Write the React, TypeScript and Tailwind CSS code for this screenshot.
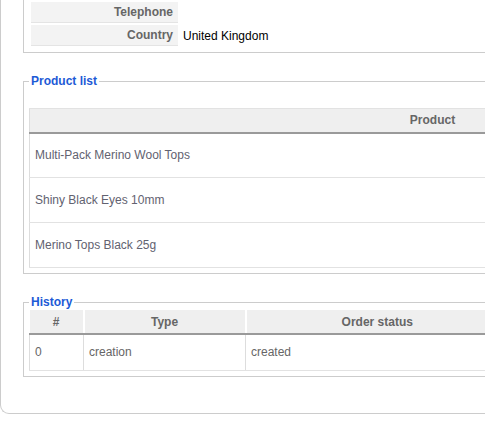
import React from "react";

const products = ["Multi-Pack Merino Wool Tops", "Shiny Black Eyes 10mm", "Merino Tops Black 25g"];

const history = [{ id: "0", type: "creation", status: "created" }];

function Legend({ children }: { children: React.ReactNode }) {
  return <legend className="px-[2px] text-[12px] font-bold leading-[16px] text-[#1d5ad6]">{children}</legend>;
}

export default function App() {
  return (
    <div className="h-[422px] w-[485px] overflow-hidden bg-white font-['Liberation_Sans',Arial,sans-serif] text-[12px]">
      <div className="w-[900px] rounded-bl-[9px] border-b border-l border-[#cccccc] pb-[36px] pl-[22px]">
        {/* address block, scrolled off at the top */}
        <div className="w-[818px] border-x border-b border-[#cccccc] px-[5px] pb-[4px]">
          <table className="border-separate border-spacing-[2px]">
            <tbody>
              <tr>
                <td className="h-[21px] w-[147px] border-b border-[#e4e4e4] bg-[#f3f3f3] pr-[5px] text-right align-middle font-bold text-[#666666]">
                  Telephone
                </td>
                <td className="pl-[3px] align-middle text-black"></td>
              </tr>
              <tr>
                <td className="h-[21px] w-[147px] border-b border-[#e4e4e4] bg-[#f3f3f3] pr-[5px] text-right align-middle font-bold text-[#666666]">
                  Country
                </td>
                <td className="pl-[3px] align-middle text-black">United Kingdom</td>
              </tr>
            </tbody>
          </table>
        </div>

        <fieldset className="mt-[20px] w-[818px] border border-[#cccccc] px-[5px] pb-[5px] pt-[19px]">
          <Legend>Product list</Legend>
          <table className="w-[806px] border-collapse">
            <thead>
              <tr>
                <th className="h-[24px] border-b-2 border-l border-t border-b-[#9a9a9a] border-l-[#dddddd] border-t-[#e2e2e2] bg-[#efefef] p-0 text-center align-middle font-bold text-[#666666]">
                  Product
                </th>
              </tr>
            </thead>
            <tbody>
              {products.map((p) => (
                <tr key={p}>
                  <td className="h-[45px] border-b border-l border-b-[#e2e2e2] border-l-[#dddddd] pl-[5px] align-middle text-[#626270]">
                    {p}
                  </td>
                </tr>
              ))}
            </tbody>
          </table>
        </fieldset>

        <fieldset className="mt-[20px] w-[818px] border border-[#cccccc] px-[5px] pb-[5px]">
          <Legend>History</Legend>
          <table className="w-[479px] table-fixed border-collapse">
            <colgroup>
              <col className="w-[54px]" />
              <col className="w-[162px]" />
              <col />
            </colgroup>
            <thead>
              <tr>
                <th className="h-[24px] border-b-2 border-b-[#9a9a9a] bg-[#efefef] p-0 text-center align-middle font-bold text-[#666666]">
                  #
                </th>
                <th className="h-[24px] border-b-2 border-l-2 border-b-[#9a9a9a] border-l-white bg-[#efefef] p-0 text-center align-middle font-bold text-[#666666]">
                  Type
                </th>
                <th className="h-[24px] border-b-2 border-l-2 border-b-[#9a9a9a] border-l-white bg-[#efefef] p-0 text-center align-middle font-bold text-[#666666]">
                  Order status
                </th>
              </tr>
            </thead>
            <tbody>
              {history.map((h) => (
                <tr key={h.id}>
                  <td className="h-[36px] border-b border-l border-b-[#e2e2e2] border-l-[#dddddd] pl-[5px] align-middle text-[#666666]">
                    {h.id}
                  </td>
                  <td className="h-[36px] border-b border-l border-b-[#e2e2e2] border-l-[#dddddd] pl-[5px] align-middle text-[#666666]">
                    {h.type}
                  </td>
                  <td className="h-[36px] border-b border-l border-b-[#e2e2e2] border-l-[#dddddd] pl-[5px] align-middle text-[#666666]">
                    {h.status}
                  </td>
                </tr>
              ))}
            </tbody>
          </table>
        </fieldset>
      </div>
    </div>
  );
}
